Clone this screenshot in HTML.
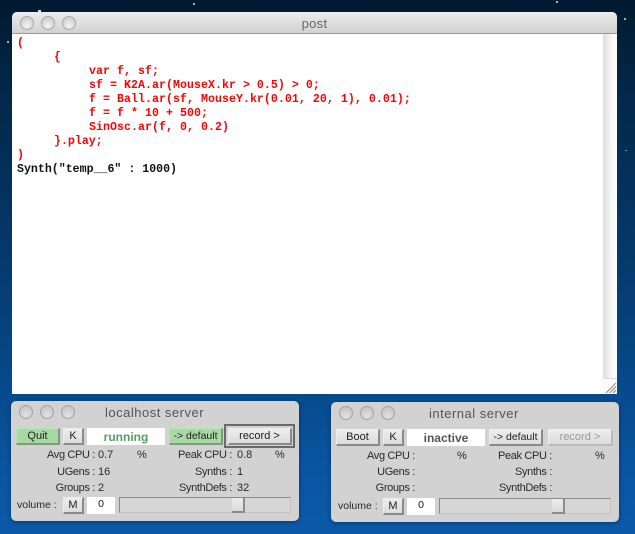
<!DOCTYPE html>
<html><head><meta charset="utf-8">
<style>
html,body{margin:0;padding:0}
body{width:635px;height:534px;overflow:hidden;position:relative;background:linear-gradient(180deg,#021a30 0,#03284a 100px,#05386a 250px,#074a8c 390px,#0a56a4 480px,#0b5aa8 534px);font-family:"Liberation Sans",sans-serif}
.a{position:absolute}
.win{position:absolute;background:#fff;border-radius:5px 5px 0 0;left:12px;top:12px;width:605px;height:382px;overflow:hidden}
.tb{position:absolute;left:0;top:0;width:605px;height:21px;background:linear-gradient(#ececec,#d2d2d2);border-bottom:1px solid #9a9a9a;text-align:center;font-size:13px;line-height:23px;color:#666;letter-spacing:.3px}
.dot{position:absolute;width:12px;height:12px;border-radius:50%;background:radial-gradient(circle at 50% 75%,#f2f2f2,#d2d2d2 70%);border:1px solid #a8a8a8}
.code{position:absolute;left:5px;top:25px;font:bold 11.6px/14px "Liberation Mono",monospace;color:#f00}
.code div{height:14px;white-space:pre}
.i1{padding-left:37px}.i2{padding-left:72px;letter-spacing:.04px}
.code b{color:#111}
.sb{position:absolute;left:591px;top:22px;width:14px;height:344px;background:linear-gradient(90deg,#dedede,#f6f6f6 60%,#fff);}
.rz{position:absolute;left:591px;top:366px;width:14px;height:16px;background:#fbfbfb;border-top:1px solid #ddd;box-sizing:border-box}
.p{position:absolute;width:288px;height:120px;background:#d2d2d2;border-radius:5px;box-shadow:0 1px 4px rgba(0,20,60,.5);font-size:11px;color:#222}
.p .dot{background:radial-gradient(circle at 50% 75%,#e2e2e2,#c8c8c8 70%);border-color:#a4a4a4;top:4px}
.t{position:absolute;top:4px;font-size:13px;line-height:16px;color:#555;letter-spacing:.5px;white-space:nowrap}
.b{position:absolute;box-sizing:border-box;height:17px;top:27px;background:linear-gradient(#ededed,#dcdcdc);border-right:2px solid #8a8a8a;border-bottom:2px solid #8a8a8a;border-top:1px solid #eee;border-left:1px solid #eee;text-align:center;font-size:11px;line-height:15px;color:#222;white-space:nowrap}
.g{background:#a8d8a4;border-top-color:#b8e4b4;border-left-color:#b8e4b4;border-right-color:#7f9a7e;border-bottom-color:#7f9a7e}
.s{position:absolute;top:27px;left:76px;width:78px;height:17px;background:#fff;text-align:center;font-weight:bold;font-size:12px;line-height:18px}
.l{position:absolute;text-align:right;font-size:11px;line-height:13px;color:#2a2a2a;white-space:nowrap;letter-spacing:-.35px}
.v{position:absolute;font-size:11px;line-height:13px;color:#2a2a2a;white-space:nowrap}
.n{position:absolute;left:76px;top:96px;width:28px;height:17px;background:#fff;text-align:center;font-size:10.5px;line-height:15px;color:#111}
.tr{position:absolute;left:108px;top:96px;width:172px;height:16px;background:#d6d6d6;border:1px solid #c2c2c2;border-left-color:#8a8a8a;border-top-color:#8a8a8a;box-sizing:border-box}
.th{position:absolute;left:221px;top:97px;width:13px;height:15px;background:linear-gradient(#ececec,#dadada);border-right:2px solid #8c8c8c;border-bottom:2px solid #8c8c8c;box-sizing:border-box}
</style></head><body>
<div class="a" style="left:38px;top:10px;width:3px;height:2px;background:#cfe0ee"></div>
<div class="a" style="left:193px;top:3px;width:2px;height:2px;background:#8fb0c8"></div>
<div class="a" style="left:556px;top:1px;width:2px;height:2px;background:#9ab8cc"></div>
<div class="a" style="left:624px;top:18px;width:2px;height:2px;background:#9ab8cc"></div>
<div class="a" style="left:7px;top:41px;width:2px;height:2px;background:#8fb0c8"></div>
<div class="a" style="left:625px;top:150px;width:2px;height:1px;background:#7c9cb8"></div>

<div class="win">
  <div class="tb">post</div>
  <div class="dot" style="left:8px;top:4px"></div>
  <div class="dot" style="left:29px;top:4px"></div>
  <div class="dot" style="left:50px;top:4px"></div>
  <div class="code">
<div>(</div>
<div class="i1">{</div>
<div class="i2">var f, sf;</div>
<div class="i2">sf = K2A.ar(MouseX.kr &gt; 0.5) &gt; 0;</div>
<div class="i2">f = Ball.ar(sf, MouseY.kr(0.01, 20, 1), 0.01);</div>
<div class="i2">f = f * 10 + 500;</div>
<div class="i2">SinOsc.ar(f, 0, 0.2)</div>
<div class="i1">}.play;</div>
<div>)</div>
<div><b>Synth("temp__6" : 1000)</b></div>
  </div>
  <div class="sb"></div>
  <div class="rz"><svg width="14" height="15" style="display:block"><path d="M3 14L13 4M6.500 14L13 7.500M10 14L13 11" stroke="#8a8a8a" stroke-width="1" fill="none"/></svg></div>
</div>

<div class="p" style="left:11px;top:401px">
  <div class="dot" style="left:8px"></div><div class="dot" style="left:29px"></div><div class="dot" style="left:50px"></div>
  <div class="t" style="left:94px">localhost server</div>
  <div class="b g" style="left:5px;width:44px">Quit</div>
  <div class="b" style="left:52px;width:21px">K</div>
  <div class="s" style="color:#5a9a68">running</div>
  <div class="b g" style="left:158px;width:54px;font-size:10.5px">-&gt; default</div>
  <div class="a" style="left:213px;top:23px;width:71px;height:24px;border:2px solid #6a6a6a;box-sizing:border-box"></div>
  <div class="b" style="left:217px;top:27px;width:64px">record &gt;</div>
  <div class="l" style="right:204px;top:48px">Avg CPU :</div><div class="v" style="left:87px;top:48px">0.7</div><div class="v" style="left:126px;top:48px">%</div>
  <div class="l" style="right:67px;top:48px">Peak CPU :</div><div class="v" style="left:226px;top:48px">0.8</div><div class="v" style="left:264px;top:48px">%</div>
  <div class="l" style="right:204px;top:65px">UGens :</div><div class="v" style="left:87px;top:65px">16</div>
  <div class="l" style="right:67px;top:65px">Synths :</div><div class="v" style="left:226px;top:65px">1</div>
  <div class="l" style="right:204px;top:81px">Groups :</div><div class="v" style="left:87px;top:81px">2</div>
  <div class="l" style="right:67px;top:81px">SynthDefs :</div><div class="v" style="left:226px;top:81px">32</div>
  <div class="v" style="left:6px;top:98px;font-size:10.5px">volume :</div>
  <div class="b" style="left:52px;top:96px;width:21px">M</div>
  <div class="n">0</div>
  <div class="tr"></div><div class="th"></div>
</div>

<div class="p" style="left:331px;top:402px">
  <div class="dot" style="left:8px"></div><div class="dot" style="left:29px"></div><div class="dot" style="left:50px"></div>
  <div class="t" style="left:98px">internal server</div>
  <div class="b" style="left:5px;width:44px">Boot</div>
  <div class="b" style="left:52px;width:21px">K</div>
  <div class="s" style="color:#555">inactive</div>
  <div class="b" style="left:158px;width:54px;font-size:10.5px">-&gt; default</div>
  <div class="b" style="left:217px;width:65px;color:#999;border-right-color:#bbb;border-bottom-color:#bbb">record &gt;</div>
  <div class="l" style="right:204px;top:48px">Avg CPU :</div><div class="v" style="left:126px;top:48px">%</div>
  <div class="l" style="right:67px;top:48px">Peak CPU :</div><div class="v" style="left:264px;top:48px">%</div>
  <div class="l" style="right:204px;top:64px">UGens :</div>
  <div class="l" style="right:67px;top:64px">Synths :</div>
  <div class="l" style="right:204px;top:80px">Groups :</div>
  <div class="l" style="right:67px;top:80px">SynthDefs :</div>
  <div class="v" style="left:7px;top:98px;font-size:10.5px">volume :</div>
  <div class="b" style="left:52px;top:96px;width:21px">M</div>
  <div class="n">0</div>
  <div class="tr"></div><div class="th"></div>
</div>
</body></html>
